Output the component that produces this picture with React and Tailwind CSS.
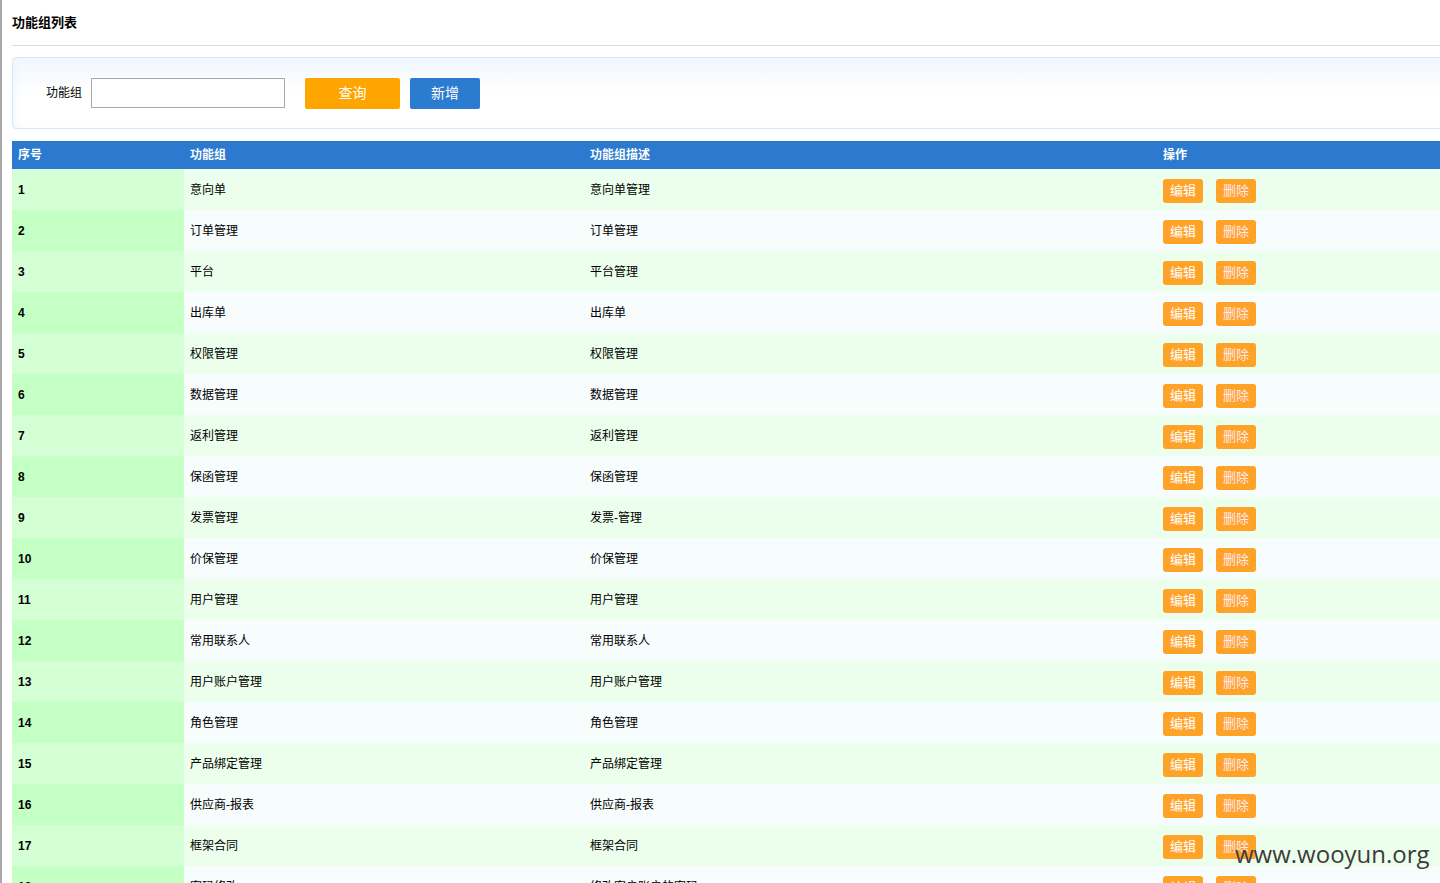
import React from "react";

const rows = [
  ["1", "意向单", "意向单管理"],
  ["2", "订单管理", "订单管理"],
  ["3", "平台", "平台管理"],
  ["4", "出库单", "出库单"],
  ["5", "权限管理", "权限管理"],
  ["6", "数据管理", "数据管理"],
  ["7", "返利管理", "返利管理"],
  ["8", "保函管理", "保函管理"],
  ["9", "发票管理", "发票-管理"],
  ["10", "价保管理", "价保管理"],
  ["11", "用户管理", "用户管理"],
  ["12", "常用联系人", "常用联系人"],
  ["13", "用户账户管理", "用户账户管理"],
  ["14", "角色管理", "角色管理"],
  ["15", "产品绑定管理", "产品绑定管理"],
  ["16", "供应商-报表", "供应商-报表"],
  ["17", "框架合同", "框架合同"],
  ["18", "密码修改", "修改客户账户的密码"],
];

export default function App() {
  return (
    <div
      className="relative h-[883px] w-[1440px] overflow-hidden bg-white text-[12px] text-black"
      style={{ fontFamily: '"Liberation Sans", "Noto Sans CJK SC", sans-serif' }}
    >
      <div className="absolute left-0 top-0 h-full w-[2px] bg-[#a9a9a9]" />
      <div className="w-[1500px] pl-[12px]">
        <div className="flex h-[46px] items-center border-b border-[#dcdcdc] pt-[1px] text-[13px] font-bold">
          功能组列表
        </div>
        <div className="mt-[11px] flex h-[72px] items-center rounded-[4px] border border-[#dbe7f4] bg-gradient-to-b from-[#f0f7ff] via-white to-white shadow-[inset_6px_0_8px_-4px_#eef5ff] pl-[33px]">
          <span className="mr-[9px] text-[12px]">功能组</span>
          <input className="h-[30px] w-[194px] border border-[#a9a9a9] bg-white outline-none" />
          <button className="ml-[20px] h-[31px] w-[95px] rounded-[2px] bg-[#ffa500] text-[14px] text-white">
            查询
          </button>
          <button className="ml-[10px] h-[31px] w-[70px] rounded-[2px] bg-[#2b7bd0] text-[14px] text-white">
            新增
          </button>
        </div>
        <div className="mt-[12px]">
          <div className="grid h-[28px] grid-cols-[172px_400px_573px_1fr] items-center bg-[#2b7ad0] font-bold text-white">
            <div className="pl-[6px]">序号</div>
            <div className="pl-[6px]">功能组</div>
            <div className="pl-[6px]">功能组描述</div>
            <div className="pl-[6px]">操作</div>
          </div>
          {rows.map((r, i) => {
            const odd = i % 2 === 0;
            return (
              <div
                key={r[0]}
                className={
                  "grid h-[41px] grid-cols-[172px_400px_573px_1fr] items-center " +
                  (odd ? "bg-[#ecffec]" : "bg-[#f7fcfd]")
                }
              >
                <div
                  className={
                    "flex h-full items-center pl-[6px] font-bold " +
                    (odd ? "bg-[#d4ffd4]" : "bg-[#c4ffc4]")
                  }
                >
                  {r[0]}
                </div>
                <div className="pl-[6px]">{r[1]}</div>
                <div className="pl-[6px]">{r[2]}</div>
                <div className="flex items-center gap-[13px] pl-[6px] pt-[3px]">
                  <button className="h-[24px] w-[40px] rounded-[3px] bg-[#ffa228] text-[13px] text-white">
                    编辑
                  </button>
                  <button className="h-[24px] w-[40px] rounded-[3px] bg-[#ffa228] text-[13px] text-[#ffe8f0]">
                    删除
                  </button>
                </div>
              </div>
            );
          })}
        </div>
      </div>
      <div
        className="absolute left-[1235px] top-[839px] text-[24px] leading-[30px] text-[#3c3c3c]"
        style={{ fontFamily: '"Open Sans", "DejaVu Sans", sans-serif' }}
      >
        www.wooyun.org
      </div>
    </div>
  );
}
